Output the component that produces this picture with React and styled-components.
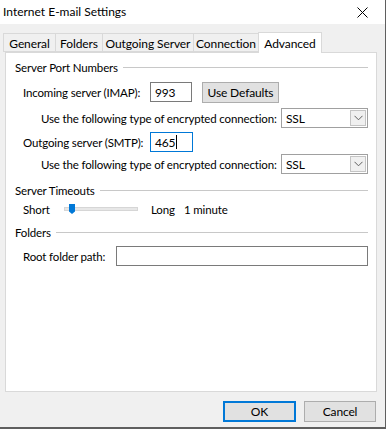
import React from "react";
import styled, { createGlobalStyle } from "styled-components";

const Global = createGlobalStyle`
  html, body { margin: 0; padding: 0; background: #f0f0f0; }
  body { font-family: Lato, "Noto Sans", sans-serif; font-size: 11.5px; letter-spacing: -0.15px; color: #000; }
  * { box-sizing: border-box; }
`;

const Window = styled.div`
  width: 386px;
  height: 429px;
  display: flex;
  flex-direction: column;
  background: #f0f0f0;
  border-right: 1px solid #5f5f5f;
  border-bottom: 2px solid #5f5f5f;
  overflow: hidden;
`;

const TitleBar = styled.div`
  height: 24px;
  background: #fff;
  display: flex;
  align-items: center;
  justify-content: space-between;
  padding: 0 17px 0 3px;
  font-size: 12px;
  letter-spacing: 0;
  line-height: 1;
`;

const Body = styled.div`
  flex: 1;
  display: flex;
  flex-direction: column;
  padding: 7px 8px 0 5px;
`;

const TabStrip = styled.div`
  display: flex;
  align-items: flex-end;
  height: 21px;
  margin-left: -2px;
  position: relative;
  z-index: 1;
`;

const Tab = styled.div`
  width: ${(p) => p.$w}px;
  height: ${(p) => (p.$active ? "21px" : "19px")};
  margin-bottom: ${(p) => (p.$active ? "-1px" : "0")};
  padding-top: ${(p) => (p.$active ? "0" : "1px")};
  margin-left: -1px;
  border: 1px solid #d9d9d9;
  border-bottom: ${(p) => (p.$active ? "none" : "1px solid #d9d9d9")};
  background: ${(p) => (p.$active ? "#fff" : "#f0f0f0")};
  display: flex;
  align-items: center;
  justify-content: center;
  white-space: nowrap;
  font-size: 12px;
  letter-spacing: -0.1px;
  &:first-child { margin-left: 0; }
`;

const Panel = styled.div`
  height: 340px;
  background: #fff;
  border: 1px solid #d9d9d9;
  padding: 7px 8px 0 9px;
  display: flex;
  flex-direction: column;
`;

const GroupHeader = styled.div`
  display: flex;
  align-items: center;
  height: 15px;
  margin-top: ${(p) => p.$mt || 0}px;
  white-space: nowrap;
  &::after {
    content: "";
    flex: 1;
    height: 1px;
    background: #c8c8c8;
    margin-left: 5px;
  }
`;

const Row = styled.div`
  display: flex;
  align-items: center;
  height: ${(p) => p.$h || 20}px;
  margin-top: ${(p) => p.$mt || 0}px;
  padding-left: ${(p) => p.$indent || 8}px;
  white-space: nowrap;
`;

const Label = styled.span`
  width: ${(p) => p.$w}px;
  flex: none;
`;

const TextBox = styled.div`
  width: ${(p) => (p.$w ? `${p.$w}px` : "auto")};
  flex: ${(p) => (p.$w ? "none" : 1)};
  height: ${(p) => p.$h || 20}px;
  border: 1px solid ${(p) => (p.$focus ? "#0078d7" : "#7a7a7a")};
  background: #fff;
  display: flex;
  align-items: center;
  padding-left: 4px;
  font-size: 12px;
`;

const Caret = styled.span`
  display: inline-block;
  width: 1px;
  height: 14px;
  background: #000;
  margin-left: 1px;
`;

const Button = styled.div`
  width: ${(p) => p.$w}px;
  height: ${(p) => p.$h || 21}px;
  margin-left: ${(p) => p.$ml || 0}px;
  background: #e1e1e1;
  border: ${(p) => (p.$default ? "2px solid #0078d7" : "1px solid #adadad")};
  display: flex;
  align-items: center;
  justify-content: center;
  font-size: 12px;
`;

const Select = styled.div`
  width: 88px;
  height: 20px;
  border: 1px solid #a0a0a0;
  background: #fff;
  display: flex;
  align-items: center;
  justify-content: space-between;
  padding: 0 1px 0 4px;
  font-size: 12px;
`;

const DropButton = styled.div`
  width: 16px;
  height: 16px;
  border: 1px solid #c4c4c4;
  background: #f0f0f0;
  display: flex;
  align-items: center;
  justify-content: center;
`;

const Track = styled.div`
  width: 74px;
  height: 4px;
  background: #e7e7e7;
  border: 1px solid #d6d6d6;
  margin-right: 13px;
  position: relative;
`;

const Thumb = styled.div`
  position: absolute;
  left: 4px;
  top: -4px;
  width: 6px;
  height: 10px;
  background: #0078d7;
  clip-path: polygon(0 0, 100% 0, 100% 75%, 50% 100%, 0 75%);
`;

const Footer = styled.div`
  display: flex;
  justify-content: flex-end;
  padding-top: 9px;
  gap: 8px;
  margin-right: 1px;
`;

const Chevron = () => (
  <svg width="9" height="6" viewBox="0 0 9 6">
    <path d="M0.5 0.8 L4.5 4.8 L8.5 0.8" fill="none" stroke="#606060" strokeWidth="1" />
  </svg>
);

const CloseIcon = () => (
  <svg width="11" height="11" viewBox="0 0 11 11">
    <path d="M0.5 0.5 L10.5 10.5 M10.5 0.5 L0.5 10.5" stroke="#000" strokeWidth="1" />
  </svg>
);

export default function App() {
  return (
    <>
      <Global />
      <Window>
        <TitleBar>
          <span>Internet E-mail Settings</span>
          <CloseIcon />
        </TitleBar>
        <Body>
          <TabStrip>
            <Tab $w={53}>General</Tab>
            <Tab $w={48}>Folders</Tab>
            <Tab $w={92}>Outgoing Server</Tab>
            <Tab $w={66}>Connection</Tab>
            <Tab $w={64} $active>Advanced</Tab>
          </TabStrip>
          <Panel>
            <GroupHeader>Server Port Numbers</GroupHeader>
            <Row $mt={7}>
              <Label $w={127}>Incoming server (IMAP):</Label>
              <TextBox $w={42}>993</TextBox>
              <Button $w={77} $ml={10}>Use Defaults</Button>
            </Row>
            <Row $mt={6} $indent={26}>
              <Label $w={240}>Use the following type of encrypted connection:</Label>
              <Select>
                <span>SSL</span>
                <DropButton><Chevron /></DropButton>
              </Select>
            </Row>
            <Row $mt={4}>
              <Label $w={127}>Outgoing server (SMTP):</Label>
              <TextBox $w={43} $focus>465<Caret /></TextBox>
            </Row>
            <Row $mt={2} $indent={26}>
              <Label $w={240}>Use the following type of encrypted connection:</Label>
              <Select>
                <span>SSL</span>
                <DropButton><Chevron /></DropButton>
              </Select>
            </Row>
            <GroupHeader $mt={9}>Server Timeouts</GroupHeader>
            <Row $mt={3} $h={16}>
              <Label $w={41}>Short</Label>
              <Track><Thumb /></Track>
              <Label $w={33}>Long</Label>
              <span>1 minute</span>
            </Row>
            <GroupHeader $mt={8}>Folders</GroupHeader>
            <Row $mt={6}>
              <Label $w={93}>Root folder path:</Label>
              <TextBox />
            </Row>
          </Panel>
          <Footer>
            <Button $w={73} $default>OK</Button>
            <Button $w={72}>Cancel</Button>
          </Footer>
        </Body>
      </Window>
    </>
  );
}
